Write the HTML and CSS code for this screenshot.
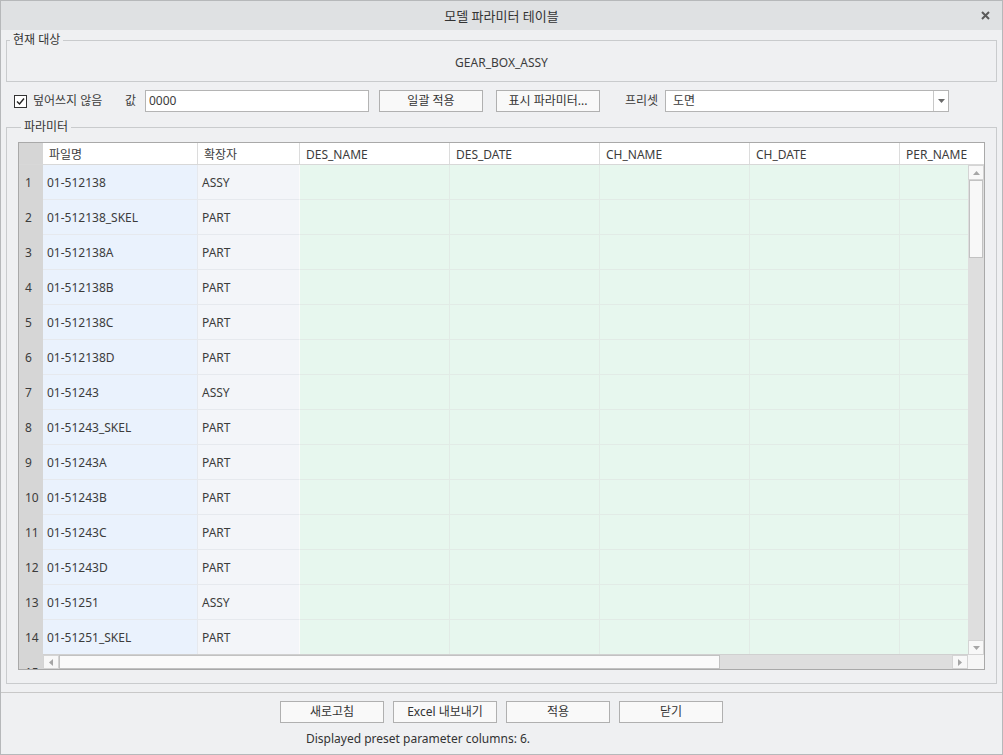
FILE: index.html
```html
<!DOCTYPE html>
<html lang="ko">
<head>
    <meta charset="UTF-8">
    <title>모델 파라미터 테이블</title>
    <link rel="stylesheet" href="styles.css">
</head>
<body>
    <div class="dialog">
        <!-- 타이틀 바 -->
        <div class="titlebar">
            <span></span>
            <span class="title">모델 파라미터 테이블</span>
            <span class="close">
                <svg width="9" height="9" viewBox="0 0 9 9"><path d="M1 1 L8 8 M8 1 L1 8" stroke="#5a5a5a" stroke-width="2"/></svg>
            </span>
        </div>

        <!-- 현재 대상 -->
        <fieldset class="group group-target">
            <legend>현재 대상</legend>
            <div class="target-name">GEAR_BOX_ASSY</div>
        </fieldset>

        <!-- 도구 모음 -->
        <div class="toolbar">
            <label class="checkbox">
                <span class="check">
                    <svg width="11" height="11" viewBox="0 0 11 11"><path d="M2 5.5 L4.5 8 L9 2.5" fill="none" stroke="#222" stroke-width="1.4"/></svg>
                </span>
                덮어쓰지 않음
            </label>
            <span class="field-label">값</span>
            <div class="textbox">0000</div>
            <button class="btn btn-apply">일괄 적용</button>
            <button class="btn btn-show">표시 파라미터...</button>
            <span class="field-label preset-label">프리셋</span>
            <div class="combo">
                <span class="combo-text">도면</span>
                <span class="combo-arrow">
                    <svg width="7" height="4" viewBox="0 0 7 4"><path d="M0 0 H7 L3.5 4 Z" fill="#6a6a6a"/></svg>
                </span>
            </div>
        </div>

        <!-- 파라미터 테이블 -->
        <fieldset class="group group-params">
            <legend>파라미터</legend>
            <div class="grid">
                <div class="grid-head">
                    <div class="hcell hnum"></div>
                    <div class="hcell">파일명</div>
                    <div class="hcell">확장자</div>
                    <div class="hcell">DES_NAME</div>
                    <div class="hcell">DES_DATE</div>
                    <div class="hcell">CH_NAME</div>
                    <div class="hcell">CH_DATE</div>
                    <div class="hcell">PER_NAME</div>
                </div>
                <div class="grid-main">
                    <div class="rows" id="rows"></div>
                    <div class="vscroll-col">
                        <div class="vscroll">
                            <span class="sb-btn">
                                <svg width="7" height="4" viewBox="0 0 7 4"><path d="M0 4 H7 L3.5 0 Z" fill="#a6a6a6"/></svg>
                            </span>
                            <span class="vthumb"></span>
                            <span class="sb-fill"></span>
                            <span class="sb-btn">
                                <svg width="7" height="4" viewBox="0 0 7 4"><path d="M0 0 H7 L3.5 4 Z" fill="#a6a6a6"/></svg>
                            </span>
                        </div>
                        <div class="corner"></div>
                    </div>
                </div>
                <div class="hscroll">
                    <span class="sb-btn">
                        <svg width="4" height="7" viewBox="0 0 4 7"><path d="M4 0 V7 L0 3.5 Z" fill="#a6a6a6"/></svg>
                    </span>
                    <span class="hthumb"></span>
                    <span class="sb-fill"></span>
                    <span class="sb-btn">
                        <svg width="4" height="7" viewBox="0 0 4 7"><path d="M0 0 V7 L4 3.5 Z" fill="#a6a6a6"/></svg>
                    </span>
                </div>
            </div>
        </fieldset>

        <!-- 하단 버튼 -->
        <div class="footer">
            <div class="footer-inner">
                <div class="footer-buttons">
                    <button class="btn">새로고침</button>
                    <button class="btn">Excel 내보내기</button>
                    <button class="btn">적용</button>
                    <button class="btn">닫기</button>
                </div>
                <div class="status">Displayed preset parameter columns: 6.</div>
            </div>
        </div>
    </div>

    <script>
        // 모델 목록 (마지막 행은 스크롤바 아래로 잘림)
        const models = [
            ['01-512138', 'ASSY'],
            ['01-512138_SKEL', 'PART'],
            ['01-512138A', 'PART'],
            ['01-512138B', 'PART'],
            ['01-512138C', 'PART'],
            ['01-512138D', 'PART'],
            ['01-51243', 'ASSY'],
            ['01-51243_SKEL', 'PART'],
            ['01-51243A', 'PART'],
            ['01-51243B', 'PART'],
            ['01-51243C', 'PART'],
            ['01-51243D', 'PART'],
            ['01-51251', 'ASSY'],
            ['01-51251_SKEL', 'PART'],
            ['', '']
        ];

        const rows = document.getElementById('rows');
        models.forEach((m, i) => {
            const row = document.createElement('div');
            row.className = 'row';
            row.innerHTML = `
                <div class="cell cnum">${i + 1}</div>
                <div class="cell cfile">${m[0]}</div>
                <div class="cell cext">${m[1]}</div>
                <div class="cell cparam"></div>
                <div class="cell cparam"></div>
                <div class="cell cparam"></div>
                <div class="cell cparam"></div>
                <div class="cell cparam"></div>
            `;
            rows.appendChild(row);
        });
    </script>
</body>
</html>
```

FILE: styles.css
```css
body {
    margin: 0;
    background: #e6e7e9;
    font-family: "Noto Sans", "Noto Sans CJK KR", sans-serif;
    font-size: 12px;
    line-height: 16px;
    color: #3c3c3c;
}

.dialog {
    width: 1003px;
    height: 755px;
    box-sizing: border-box;
    border: 1px solid #b6b8ba;
    background: #eff0f2;
    display: flex;
    flex-direction: column;
}

.titlebar {
    height: 29px;
    background: #dfe1e3;
    display: grid;
    grid-template-columns: 1fr auto 1fr;
    align-items: center;
}

.title {
    font-size: 13px;
    color: #333;
}

.close {
    justify-self: end;
    margin-right: 12px;
    display: flex;
}

.group {
    margin: 0 5px;
    padding: 0;
    border: 1px solid #c9cbcd;
    min-width: 0;
}

.group legend {
    padding: 0 3px;
    line-height: 16px;
    color: #333;
}

.group-target {
    margin-top: 2px;
}

.group-target legend {
    margin-left: 3px;
}

.target-name {
    text-align: center;
    padding: 7px 0 10px;
}

.toolbar {
    margin-top: 8px;
    padding-left: 13px;
    display: flex;
    align-items: center;
    height: 22px;
}

.checkbox {
    width: 111px;
    display: flex;
    align-items: center;
}

.check {
    width: 11px;
    height: 11px;
    border: 1px solid #333;
    background: #fff;
    margin-right: 6px;
    display: flex;
}

.field-label {
    width: 20px;
}

.textbox {
    width: 224px;
    height: 22px;
    box-sizing: border-box;
    border: 1px solid #b4b4b4;
    background: #fff;
    padding: 2px 3px;
}

.btn {
    width: 104px;
    height: 22px;
    box-sizing: border-box;
    border: 1px solid #b0b0b0;
    background: #f9f9f9;
    font: inherit;
    color: #333;
    padding: 0;
}

.btn-apply {
    margin-left: 10px;
}

.btn-show {
    margin-left: 13px;
}

.preset-label {
    margin-left: 25px;
    width: 40px;
}

.combo {
    width: 284px;
    height: 22px;
    box-sizing: border-box;
    border: 1px solid #b4b4b4;
    background: #fff;
    display: flex;
}

.combo-text {
    flex: 1;
    padding: 2px 7px;
}

.combo-arrow {
    width: 14px;
    border-left: 1px solid #c8c8c8;
    display: flex;
    align-items: center;
    justify-content: center;
}

.group-params {
    margin-top: 7px;
    padding: 7px 11px 13px;
}

.group-params legend {
    margin-left: 3px;
}

.grid {
    position: relative;
    height: 528px;
    box-sizing: border-box;
    border: 1px solid #a9a9a9;
    background: #fff;
    overflow: hidden;
}

.grid-head,
.row {
    display: grid;
    grid-template-columns: 24px 155px 102px 150px 150px 150px 150px 150px;
}

.grid-head {
    height: 22px;
    box-sizing: border-box;
    border-bottom: 1px solid #d8d8d8;
}

.hcell {
    border-right: 1px solid #dcdcdc;
    padding: 4px 6px 0;
    white-space: nowrap;
}

.hnum {
    background: #d6d6d6;
    border-right: none;
}

.grid-main {
    display: flex;
    height: 504px;
}

.rows {
    flex: 1;
    overflow: hidden;
}

.row {
    height: 35px;
}

.cell {
    box-sizing: border-box;
    border-right: 1px solid #e6e9ee;
    border-bottom: 1px solid #e6e9ee;
    padding: 10px 4px 0;
    white-space: nowrap;
}

.cnum {
    background: #d6d6d6;
    border-color: #d6d6d6;
    padding-left: 6px;
    padding-right: 0;
}

.cfile {
    background: #eaf2fd;
}

.cext {
    background: #f3f5f9;
    border-right-color: #fbfbfb;
}

.cparam {
    background: #e7f7ee;
    border-color: #e2ebe6;
}

.vscroll-col {
    width: 16px;
    display: flex;
    flex-direction: column;
}

.vscroll {
    height: 490px;
    background: #dedede;
    display: flex;
    flex-direction: column;
}

.vscroll .sb-btn {
    height: 15px;
}

.sb-btn {
    box-sizing: border-box;
    background: #f8f8f8;
    border: 1px solid #d4d4d4;
    display: flex;
    align-items: center;
    justify-content: center;
}

.sb-fill {
    flex: 1;
}

.vthumb {
    height: 78px;
    margin: 0 1px;
    box-sizing: border-box;
    background: #f8f8f8;
    border: 1px solid #c2c2c2;
}

.corner {
    flex: 1;
    background: #f6f6f6;
}

.hscroll {
    position: absolute;
    left: 24px;
    right: 16px;
    bottom: 0;
    height: 14px;
    background: #dedede;
    border-top: 1px solid #d0d0d0;
    display: flex;
}

.hscroll .sb-btn {
    width: 16px;
}

.hthumb {
    width: 661px;
    box-sizing: border-box;
    background: #fafafa;
    border: 1px solid #c2c2c2;
}

.footer {
    margin-top: 8px;
    border-top: 1px solid #c8c8c8;
    padding-top: 8px;
    flex: 1;
}

.footer-inner {
    width: 443px;
    margin: 0 auto;
}

.footer-buttons {
    display: flex;
    gap: 9px;
}

.status {
    margin-top: 8px;
    padding-left: 26px;
    color: #333;
}
```
